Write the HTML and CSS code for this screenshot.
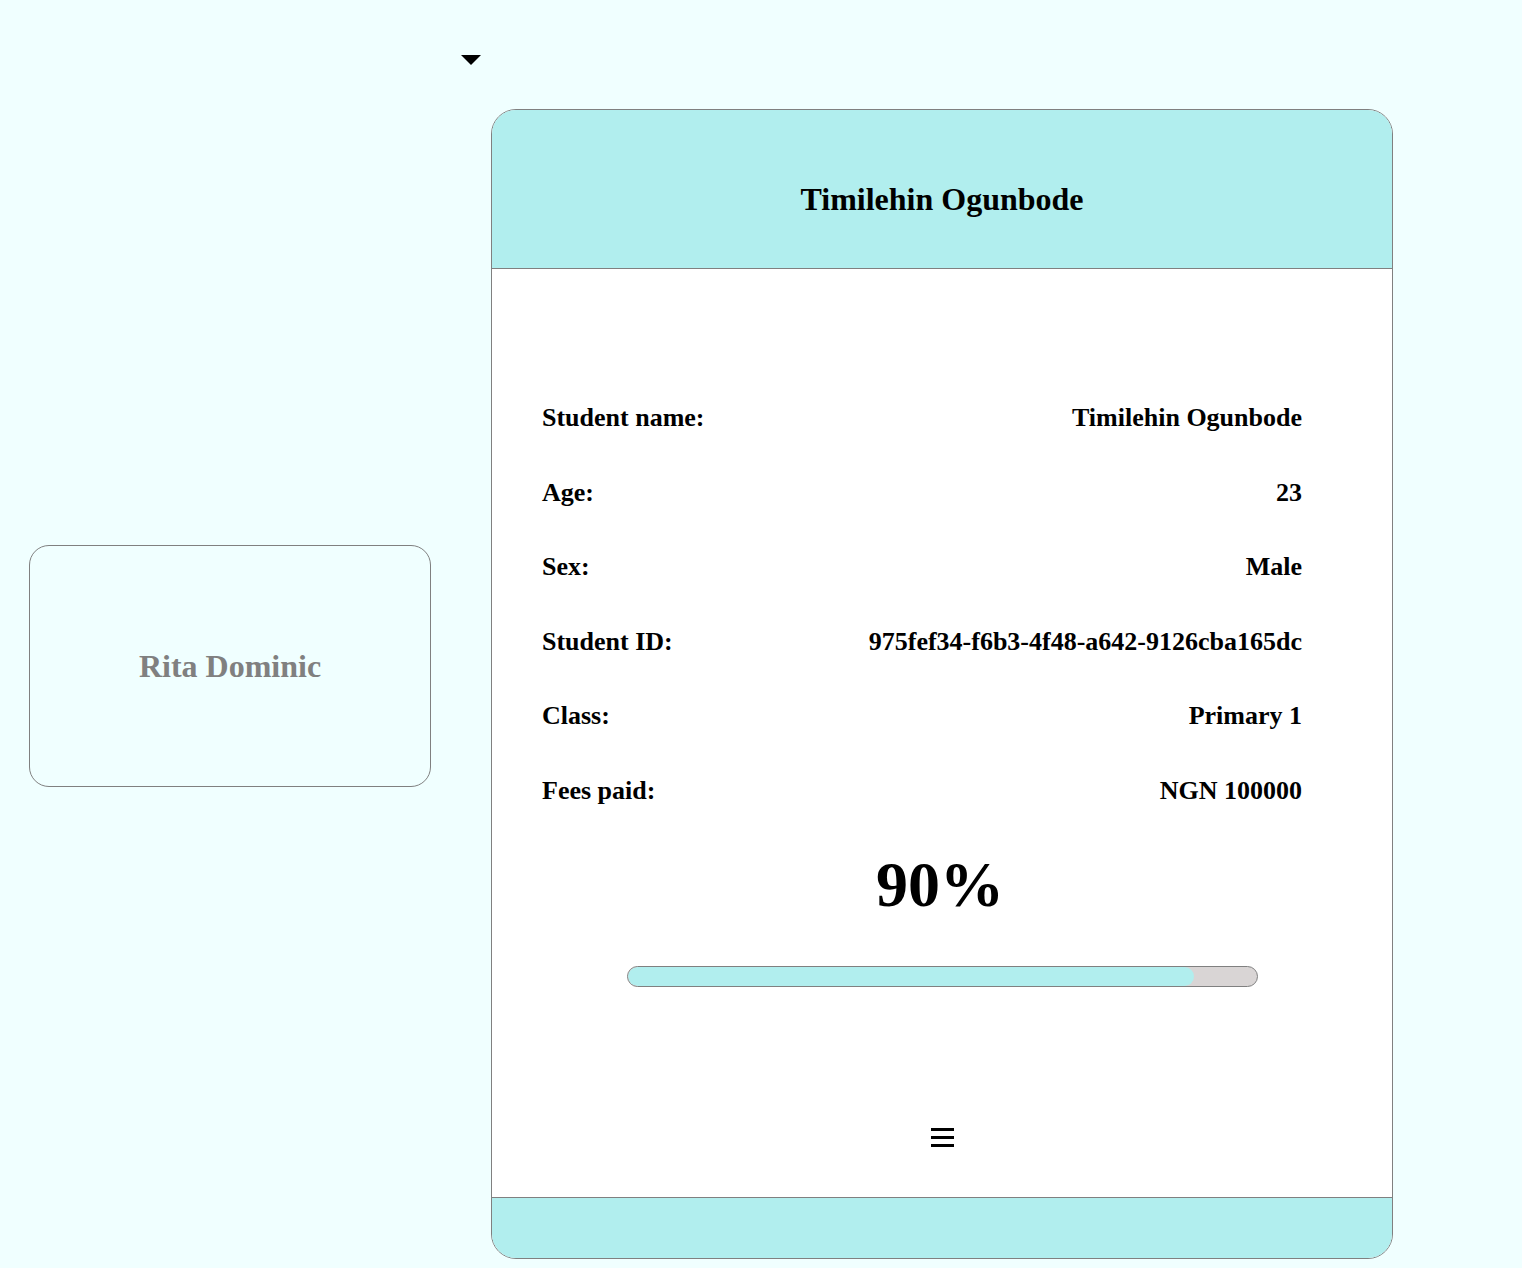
FILE: index.html
```html
<!DOCTYPE html>
<html>
<head>
<meta charset="utf-8">
<link rel="stylesheet" href="styles.css">
</head>
<body>
<div class="page">
  <div class="side-card">
    <h2 class="side-name">Rita Dominic</h2>
  </div>
  <div class="main-col">
    <div class="caret-row"><span class="caret"></span></div>
    <div class="card">
      <div class="card-head">
        <h2 class="card-title">Timilehin Ogunbode</h2>
      </div>
      <div class="card-body">
        <div class="rows">
          <div class="row"><span>Student name:</span><span>Timilehin Ogunbode</span></div>
          <div class="row"><span>Age:</span><span>23</span></div>
          <div class="row"><span>Sex:</span><span>Male</span></div>
          <div class="row"><span>Student ID:</span><span>975fef34-f6b3-4f48-a642-9126cba165dc</span></div>
          <div class="row"><span>Class:</span><span>Primary 1</span></div>
          <div class="row"><span>Fees paid:</span><span>NGN 100000</span></div>
        </div>
        <div class="percent">90%</div>
        <div class="bar"><div class="bar-fill" style="width:90%"></div></div>
        <div class="menu" aria-label="menu"><span></span><span></span><span></span></div>
      </div>
      <div class="card-foot"></div>
    </div>
  </div>
</div>
</body>
</html>
```

FILE: styles.css
```css
html, body {
  margin: 0;
  padding: 0;
  background: #f0ffff;
  font-family: "Liberation Serif", "Times New Roman", serif;
  color: #000;
}
.page {
  display: flex;
  align-items: flex-start;
  padding-left: 29px;
  padding-top: 55px;
}
.side-card {
  width: 400px;
  height: 240px;
  border: 1px solid #808080;
  border-radius: 20px;
  margin-top: 490px;
  display: flex;
  align-items: center;
  justify-content: center;
}
.side-name {
  margin: 0;
  font-size: 32px;
  font-weight: bold;
  color: #808080;
}
.main-col {
  margin-left: 30px;
  display: flex;
  flex-direction: column;
}
.caret-row {
  height: 54px;
}
.caret {
  display: block;
  width: 0;
  height: 0;
  border-left: 10px solid transparent;
  border-right: 10px solid transparent;
  border-top: 10px solid #000;
}
.card {
  margin-left: 30px;
  width: 900px;
  border: 1px solid #808080;
  border-radius: 25px;
  overflow: hidden;
  background: #fff;
}
.card-head {
  height: 159px;
  box-sizing: border-box;
  background: #b1eeee;
  border-bottom: 1px solid #808080;
  display: flex;
  justify-content: center;
  align-items: center;
  padding-top: 20px;
}
.card-title {
  margin: 0;
  font-size: 32px;
  font-weight: bold;
}
.card-body {
  display: flex;
  flex-direction: column;
  align-items: center;
  padding-top: 134px;
  height: 928px;
  box-sizing: border-box;
}
.rows {
  align-self: stretch;
  padding: 0 90px 0 50px;
  display: flex;
  flex-direction: column;
  gap: 44.5px;
}
.row {
  display: flex;
  justify-content: space-between;
  font-size: 26px;
  font-weight: bold;
  line-height: 30px;
}
.percent {
  margin-top: 42px;
  font-size: 64px;
  font-weight: bold;
  line-height: 74px;
  margin-left: -4px;
}
.bar {
  margin-top: 44px;
  width: 629px;
  height: 19px;
  border: 1px solid #808080;
  border-radius: 11px;
  background: #d9d5d5;
  overflow: hidden;
}
.bar-fill {
  height: 100%;
  background: #b1eeee;
  border-radius: 11px;
}
.menu {
  margin-top: 141px;
  width: 23px;
  display: flex;
  flex-direction: column;
  gap: 5px;
}
.menu span {
  display: block;
  height: 3px;
  background: #000;
}
.card-foot {
  height: 60px;
  background: #b1eeee;
  border-top: 1px solid #808080;
}
```
